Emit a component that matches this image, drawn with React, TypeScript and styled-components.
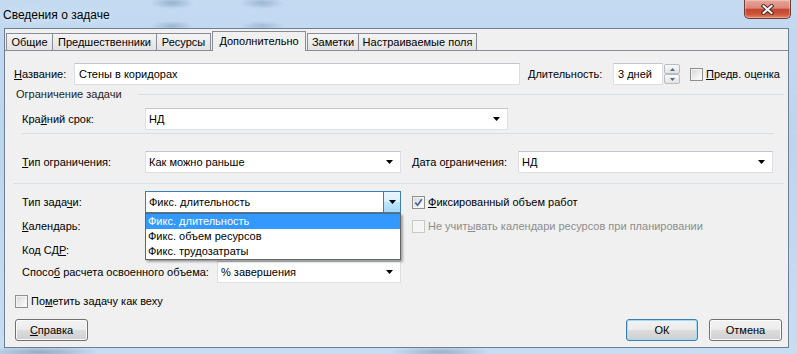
import React from "react";
import styled, { createGlobalStyle } from "styled-components";

const ui = `"Liberation Sans", Arial, sans-serif`;

const GlobalStyle = createGlobalStyle`
  html, body { margin: 0; padding: 0; }
  body {
    width: 797px;
    height: 354px;
    overflow: hidden;
    font-family: ${ui};
    font-size: 11px;
    color: #000;
  }
  u { text-decoration: underline; text-underline-offset: 1px; }
`;

const Window = styled.div`
  width: 797px;
  height: 354px;
  display: flex;
  flex-direction: column;
  background:
    radial-gradient(ellipse 22px 6px at 172px 3px, rgba(70, 100, 140, 0.35), transparent),
    radial-gradient(ellipse 22px 6px at 262px 3px, rgba(70, 100, 140, 0.3), transparent),
    radial-gradient(ellipse 22px 5px at 172px 26px, rgba(70, 100, 140, 0.3), transparent),
    radial-gradient(ellipse 22px 5px at 262px 26px, rgba(70, 100, 140, 0.25), transparent),
    radial-gradient(ellipse 60px 6px at 40px 352px, rgba(60, 80, 110, 0.35), transparent),
    radial-gradient(ellipse 50px 6px at 440px 352px, rgba(60, 80, 110, 0.3), transparent),
    linear-gradient(180deg, #c3daf1 0%, #bcd5ee 40%, #c7ddf2 100%);
`;

const TitleBar = styled.div`
  height: 28px;
  flex-shrink: 0;
  display: flex;
  align-items: flex-start;
`;

const Caption = styled.div`
  font-size: 12px;
  line-height: 14px;
  padding: 8px 0 0 3px;
  color: #000;
  text-shadow: 0 0 8px rgba(255, 255, 255, 0.9);
`;

const CloseBtn = styled.div`
  margin-left: auto;
  margin-right: 6px;
  width: 47px;
  height: 19px;
  box-sizing: border-box;
  border: 1px solid #6e3a33;
  border-top: none;
  border-radius: 0 0 5px 5px;
  background: linear-gradient(180deg, #e7a598 0%, #d9877a 45%, #c4472f 52%, #cc5337 78%, #e5876b 100%);
  box-shadow: inset 0 0 0 1px rgba(255, 255, 255, 0.3);
  display: flex;
  align-items: center;
  justify-content: center;
`;

const Client = styled.div`
  margin: 0 8px 0 4px;
  height: 320px;
  box-sizing: border-box;
  border: 1px solid #6e7f92;
  background: #f0f0f0;
  display: flex;
  flex-direction: column;
`;

const TabStrip = styled.div`
  display: flex;
  align-items: flex-end;
  height: 19px;
  padding: 2px 0 0 1px;
  flex-shrink: 0;
`;

const Tab = styled.div<{ $w: number; $active?: boolean }>`
  width: ${(p) => p.$w}px;
  height: ${(p) => (p.$active ? 20 : 17)}px;
  box-sizing: border-box;
  margin-left: ${(p) => (p.$active ? 1 : -1)}px;
  margin-right: ${(p) => (p.$active ? 2 : 0)}px;
  margin-bottom: ${(p) => (p.$active ? -1 : 0)}px;
  padding-bottom: ${(p) => (p.$active ? 2 : 0)}px;
  border: 1px solid #898c95;
  border-bottom: none;
  background: ${(p) => (p.$active ? "#f0f0f0" : "linear-gradient(180deg, #f5f5f5 0%, #ebebeb 50%, #e3e3e3 100%)")};
  position: relative;
  z-index: ${(p) => (p.$active ? 1 : 0)};
  display: flex;
  align-items: center;
  justify-content: center;
  white-space: nowrap;
  &:first-child { margin-left: 0; }
`;

const Panel = styled.div`
  flex: 1;
  border-top: 1px solid #898c95;
  display: flex;
  flex-direction: column;
  padding: 0 4px 0 9px;
`;

const Row = styled.div<{ $h: number; $mt: number; $pl?: number }>`
  display: flex;
  align-items: center;
  height: ${(p) => p.$h}px;
  margin-top: ${(p) => p.$mt}px;
  padding-left: ${(p) => p.$pl ?? 0}px;
  flex-shrink: 0;
`;

const FieldLabel = styled.span<{ $w: number; $ml?: number }>`
  width: ${(p) => p.$w}px;
  margin-left: ${(p) => p.$ml ?? 0}px;
  flex-shrink: 0;
  white-space: nowrap;
`;

const TextBox = styled.div<{ $w: number }>`
  width: ${(p) => p.$w}px;
  height: 22px;
  box-sizing: border-box;
  border: 1px solid #dcdfe4;
  border-top-color: #c2c6cc;
  background: #fff;
  padding: 0 4px;
  display: flex;
  align-items: center;
  flex-shrink: 0;
`;

const ComboWrap = styled.div`
  position: relative;
  flex-shrink: 0;
`;

const Combo = styled.div<{ $w: number; $open?: boolean }>`
  width: ${(p) => p.$w}px;
  height: 22px;
  box-sizing: border-box;
  border: 1px solid ${(p) => (p.$open ? "#3c7fb1" : "#dcdfe4")};
  border-top-color: ${(p) => (p.$open ? "#3c7fb1" : "#c2c6cc")};
  background: #fff;
  padding-left: 3px;
  display: flex;
  align-items: center;
  flex-shrink: 0;
  white-space: nowrap;
`;

const ComboArrow = styled.span`
  margin-left: auto;
  margin-right: 7px;
  display: flex;
`;

const DropButton = styled.span`
  margin-left: auto;
  width: 17px;
  height: 100%;
  box-sizing: border-box;
  border-left: 1px solid #3c7fb1;
  background: linear-gradient(180deg, #eaf6fd 0%, #d9f0fc 50%, #bee6fd 50%, #a7d9f5 100%);
  display: flex;
  align-items: center;
  justify-content: center;
`;

const DropList = styled.div`
  position: absolute;
  top: 100%;
  left: 0;
  right: 0;
  z-index: 5;
  background: #fff;
  border: 1px solid #646464;
  box-shadow: 2px 2px 2px rgba(0, 0, 0, 0.3);
`;

const DropItem = styled.div<{ $selected?: boolean }>`
  height: 15px;
  line-height: 15px;
  padding-left: 2px;
  white-space: nowrap;
  background: ${(p) => (p.$selected ? "#3399ff" : "transparent")};
  color: ${(p) => (p.$selected ? "#fff" : "#000")};
`;

const Spin = styled.div`
  width: 16px;
  height: 20px;
  margin-left: 1px;
  display: flex;
  flex-direction: column;
  flex-shrink: 0;
`;

const SpinBtn = styled.div`
  flex: 1;
  border: 1px solid #b9bcc1;
  border-radius: 2px;
  background: linear-gradient(180deg, #f8f8f8 0%, #e3e3e3 100%);
  display: flex;
  align-items: center;
  justify-content: center;
`;

const CheckLabel = styled.label<{ $disabled?: boolean; $ml?: number }>`
  display: flex;
  align-items: center;
  gap: 3px;
  margin-left: ${(p) => p.$ml ?? 0}px;
  color: ${(p) => (p.$disabled ? "#8d8d8d" : "#000")};
  white-space: nowrap;
`;

const Box = styled.span<{ $disabled?: boolean }>`
  width: 13px;
  height: 13px;
  box-sizing: border-box;
  flex-shrink: 0;
  border: 1px solid ${(p) => (p.$disabled ? "#c8c8c8" : "#8e8f8f")};
  background: ${(p) =>
    p.$disabled ? "#f4f4f4" : "linear-gradient(135deg, #d4d4d4 0%, #eeeeee 55%, #ffffff 100%)"};
  box-shadow: inset 0 0 0 1px ${(p) => (p.$disabled ? "#f7f7f7" : "#f4f4f4")};
  display: flex;
  align-items: center;
  justify-content: center;
`;

const GroupHead = styled.div`
  display: flex;
  align-items: center;
  height: 16px;
  margin-top: 1px;
  padding-left: 2px;
  color: #1e1e1e;
  flex-shrink: 0;
`;

const GroupLine = styled.div`
  flex: 1;
  border-top: 1px solid #d5dfe5;
  margin-left: 16px;
`;

const Separator = styled.div<{ $mt: number; $ml: number; $mr: number }>`
  border-top: 1px solid #d5dfe5;
  margin: ${(p) => p.$mt}px ${(p) => p.$mr}px 0 ${(p) => p.$ml}px;
  flex-shrink: 0;
`;

const ButtonRow = styled.div`
  display: flex;
  align-items: center;
  height: 22px;
  margin-top: 8px;
  padding: 0 2px 0 1px;
  gap: 11px;
`;

const Spacer = styled.div`
  flex: 1;
`;

const Button = styled.div<{ $w: number; $default?: boolean }>`
  width: ${(p) => p.$w}px;
  height: 22px;
  box-sizing: border-box;
  border: 1px solid ${(p) => (p.$default ? "#3c7fb1" : "#707070")};
  border-radius: 3px;
  background: linear-gradient(180deg, #f2f2f2 0%, #ebebeb 50%, #dddddd 50%, #cfcfcf 100%);
  box-shadow: inset 0 0 0 1px ${(p) => (p.$default ? "#9fdcf5" : "#fbfbfb")};
  display: flex;
  align-items: center;
  justify-content: center;
`;

const DownArrow = () => (
  <svg width="7" height="4" viewBox="0 0 7 4">
    <polygon points="0,0 7,0 3.5,4" fill="#000" />
  </svg>
);

const SpinArrow = ({ up }: { up?: boolean }) => (
  <svg width="5" height="3" viewBox="0 0 5 3">
    <polygon points={up ? "0,3 5,3 2.5,0" : "0,0 5,0 2.5,3"} fill="#4f6a8f" />
  </svg>
);

const Check = () => (
  <svg width="9" height="9" viewBox="0 0 9 9">
    <path d="M1.3 4.6 L3.6 7.2 L7.8 1.3" stroke="#4a5f97" strokeWidth="1.7" fill="none" />
  </svg>
);

const CloseGlyph = () => (
  <svg width="13" height="11" viewBox="0 0 13 11">
    <path d="M2.5 2 L10.5 9 M10.5 2 L2.5 9" stroke="#4a2a26" strokeWidth="4" strokeLinecap="square" />
    <path d="M2.5 2 L10.5 9 M10.5 2 L2.5 9" stroke="#f4f4f4" strokeWidth="2" strokeLinecap="square" />
  </svg>
);

const CheckBox = ({ checked, disabled }: { checked?: boolean; disabled?: boolean }) => (
  <Box $disabled={disabled}>{checked && <Check />}</Box>
);

const SelectBox = ({ w, value }: { w: number; value?: string }) => (
  <Combo $w={w}>
    {value}
    <ComboArrow>
      <DownArrow />
    </ComboArrow>
  </Combo>
);

const taskTypes = ["Фикс. длительность", "Фикс. объем ресурсов", "Фикс. трудозатраты"];

const tabs = [
  { name: "Общие", w: 47 },
  { name: "Предшественники", w: 105 },
  { name: "Ресурсы", w: 55 },
  { name: "Дополнительно", w: 94, active: true },
  { name: "Заметки", w: 52 },
  { name: "Настраиваемые поля", w: 119 },
];

export default function App() {
  return (
    <>
      <GlobalStyle />
      <Window>
        <TitleBar>
          <Caption>Сведения о задаче</Caption>
          <CloseBtn>
            <CloseGlyph />
          </CloseBtn>
        </TitleBar>
        <Client>
          <TabStrip>
            {tabs.map((t) => (
              <Tab key={t.name} $w={t.w} $active={t.active}>
                {t.name}
              </Tab>
            ))}
          </TabStrip>
          <Panel>
            <Row $h={22} $mt={12}>
              <FieldLabel $w={60}>
                <u>Н</u>азвание:
              </FieldLabel>
              <TextBox $w={446}>Стены в коридорах</TextBox>
              <FieldLabel $w={85} $ml={8}>
                <u>Д</u>лительность:
              </FieldLabel>
              <TextBox $w={50}>3 дней</TextBox>
              <Spin>
                <SpinBtn>
                  <SpinArrow up />
                </SpinBtn>
                <SpinBtn>
                  <SpinArrow />
                </SpinBtn>
              </Spin>
              <CheckLabel $ml={10}>
                <CheckBox />
                <span>
                  <u>П</u>редв. оценка
                </span>
              </CheckLabel>
            </Row>

            <GroupHead>
              Ограничение задачи
              <GroupLine />
            </GroupHead>

            <Row $h={22} $mt={6} $pl={8}>
              <FieldLabel $w={123}>
                Кра<u>й</u>ний срок:
              </FieldLabel>
              <SelectBox w={363} value="НД" />
            </Row>
            <Separator $mt={3} $ml={8} $mr={10} />

            <Row $h={22} $mt={17} $pl={8}>
              <FieldLabel $w={123}>
                <u>Т</u>ип ограничения:
              </FieldLabel>
              <SelectBox w={256} value="Как можно раньше" />
              <FieldLabel $w={106} $ml={11}>
                Дата о<u>г</u>раничения:
              </FieldLabel>
              <SelectBox w={255} value="НД" />
            </Row>
            <Separator $mt={10} $ml={0} $mr={0} />

            <Row $h={24} $mt={6} $pl={8}>
              <FieldLabel $w={123}>
                Тип зада<u>ч</u>и:
              </FieldLabel>
              <ComboWrap>
                <Combo $w={256} $open>
                  {taskTypes[0]}
                  <DropButton>
                    <DownArrow />
                  </DropButton>
                </Combo>
                <DropList>
                  {taskTypes.map((t, i) => (
                    <DropItem key={t} $selected={i === 0}>
                      {t}
                    </DropItem>
                  ))}
                </DropList>
              </ComboWrap>
              <CheckLabel $ml={11}>
                <CheckBox checked />
                <span>
                  <u>Ф</u>иксированный объем работ
                </span>
              </CheckLabel>
            </Row>

            <Row $h={24} $mt={0} $pl={8}>
              <FieldLabel $w={123}>
                <u>К</u>алендарь:
              </FieldLabel>
              <SelectBox w={256} />
              <CheckLabel $ml={11} $disabled>
                <CheckBox disabled />
                <span>
                  Не учит<u>ы</u>вать календари ресурсов при планировании
                </span>
              </CheckLabel>
            </Row>

            <Row $h={23} $mt={0} $pl={8}>
              <FieldLabel $w={123}>
                Код СД<u>Р</u>:
              </FieldLabel>
              <TextBox $w={256} />
            </Row>

            <Row $h={22} $mt={0} $pl={8}>
              <FieldLabel $w={195}>
                Спосо<u>б</u> расчета освоенного объема:
              </FieldLabel>
              <SelectBox w={184} value="% завершения" />
            </Row>

            <Row $h={20} $mt={8} $pl={1}>
              <CheckLabel>
                <CheckBox />
                <span>
                  По<u>м</u>етить задачу как веху
                </span>
              </CheckLabel>
            </Row>

            <ButtonRow>
              <Button $w={73}>
                <span>
                  <u>С</u>правка
                </span>
              </Button>
              <Spacer />
              <Button $w={72} $default>
                ОК
              </Button>
              <Button $w={73}>Отмена</Button>
            </ButtonRow>
          </Panel>
        </Client>
      </Window>
    </>
  );
}
